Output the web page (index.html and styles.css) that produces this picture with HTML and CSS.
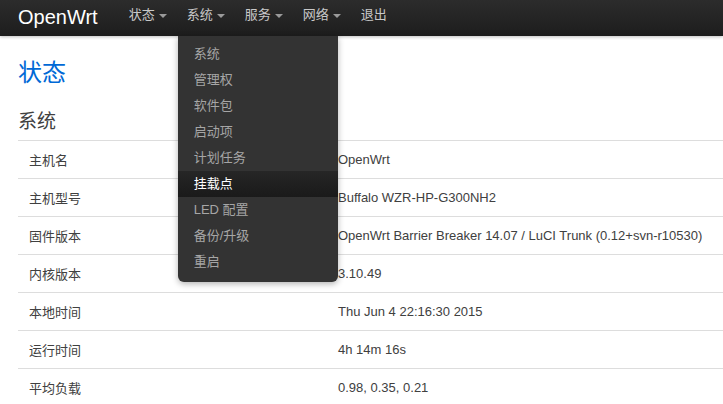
FILE: index.html
```html
<!DOCTYPE html>
<html lang="zh">
<head>
<meta charset="utf-8">
<title>OpenWrt - 状态</title>
<link rel="stylesheet" href="styles.css">
</head>
<body>
<header class="topbar">
  <a class="brand" href="#">OpenWrt</a>
  <ul class="nav">
    <li class="nav-item"><a href="#">状态<span class="caret"></span></a></li>
    <li class="nav-item open"><a href="#">系统<span class="caret"></span></a>
      <ul class="dropdown">
        <li><a href="#">系统</a></li>
        <li><a href="#">管理权</a></li>
        <li><a href="#">软件包</a></li>
        <li><a href="#">启动项</a></li>
        <li><a href="#">计划任务</a></li>
        <li class="active"><a href="#">挂载点</a></li>
        <li><a href="#">LED 配置</a></li>
        <li><a href="#">备份/升级</a></li>
        <li><a href="#">重启</a></li>
      </ul>
    </li>
    <li class="nav-item"><a href="#">服务<span class="caret"></span></a></li>
    <li class="nav-item"><a href="#">网络<span class="caret"></span></a></li>
    <li class="nav-item"><a href="#">退出</a></li>
  </ul>
</header>
<main class="content">
  <h2 class="page-title">状态</h2>
  <h3 class="section-title">系统</h3>
  <table class="info">
    <tr><td class="label">主机名</td><td>OpenWrt</td></tr>
    <tr><td class="label">主机型号</td><td>Buffalo WZR-HP-G300NH2</td></tr>
    <tr><td class="label">固件版本</td><td>OpenWrt Barrier Breaker 14.07 / LuCI Trunk (0.12+svn-r10530)</td></tr>
    <tr><td class="label">内核版本</td><td>3.10.49</td></tr>
    <tr><td class="label">本地时间</td><td>Thu Jun 4 22:16:30 2015</td></tr>
    <tr><td class="label">运行时间</td><td>4h 14m 16s</td></tr>
    <tr><td class="label">平均负载</td><td>0.98, 0.35, 0.21</td></tr>
  </table>
</main>
</body>
</html>
```
FILE: styles.css
```css
* { box-sizing: border-box; }
html, body { margin: 0; padding: 0; }
body {
  font-family: "Liberation Sans", Arial, "Noto Sans CJK SC", sans-serif;
  font-size: 13px;
  color: #404040;
  background: #fff;
  overflow: hidden;
}
a { text-decoration: none; }
ul { list-style: none; margin: 0; padding: 0; }

.topbar {
  height: 36px;
  background: linear-gradient(#2c2c2c, #1d1d1d);
  display: flex;
  align-items: center;
  padding: 0 18px;
  box-shadow: 0 1px 3px rgba(0,0,0,0.25);
  position: relative;
  z-index: 5;
}
.brand {
  color: #fff;
  font-size: 20px;
  line-height: 36px;
  margin-right: 21px;
  margin-top: -2px;
}
.nav { display: flex; height: 36px; }
.nav-item { position: relative; }
.nav-item > a {
  display: flex;
  align-items: center;
  height: 36px;
  padding: 0 10px;
  color: #c8c8c8;
  font-size: 13px;
  line-height: 36px;
  margin-top: -3px;
}
.caret {
  display: inline-block;
  width: 0; height: 0;
  border-left: 4px solid transparent;
  border-right: 4px solid transparent;
  border-top: 4px solid #9a9a9a;
  margin-left: 4px;
  margin-top: 1px;
}
.dropdown {
  position: absolute;
  top: 36px;
  left: 1px;
  width: 160px;
  background: #333;
  padding: 5px 0 7px;
  border-radius: 0 0 6px 6px;
  box-shadow: 0 2px 6px rgba(0,0,0,0.3);
}
.dropdown li a {
  display: block;
  height: 26px;
  line-height: 26px;
  padding: 0 16px;
  color: #a6a6a6;
  font-size: 13px;
}
.dropdown li.active a {
  background: linear-gradient(#262626, #1a1a1a);
  color: #fff;
}

.content { padding: 0 0 0 18px; }
.page-title {
  margin: 0;
  padding-top: 22px;
  font-size: 24px;
  font-weight: normal;
  line-height: 30px;
  color: #0069d6;
}
.section-title {
  margin: 0;
  padding-top: 22px;
  font-size: 19px;
  font-weight: normal;
  line-height: 24px;
  color: #404040;
  padding-bottom: 6px;
}
.info {
  width: 100%;
  border-collapse: collapse;
}
.info td {
  border-top: 1px solid #ddd;
  height: 38px;
  padding: 0 10px 0 11px;
  vertical-align: middle;
}
.info td.label { width: 320px; }
.info td + td { padding-left: 0; }
```
